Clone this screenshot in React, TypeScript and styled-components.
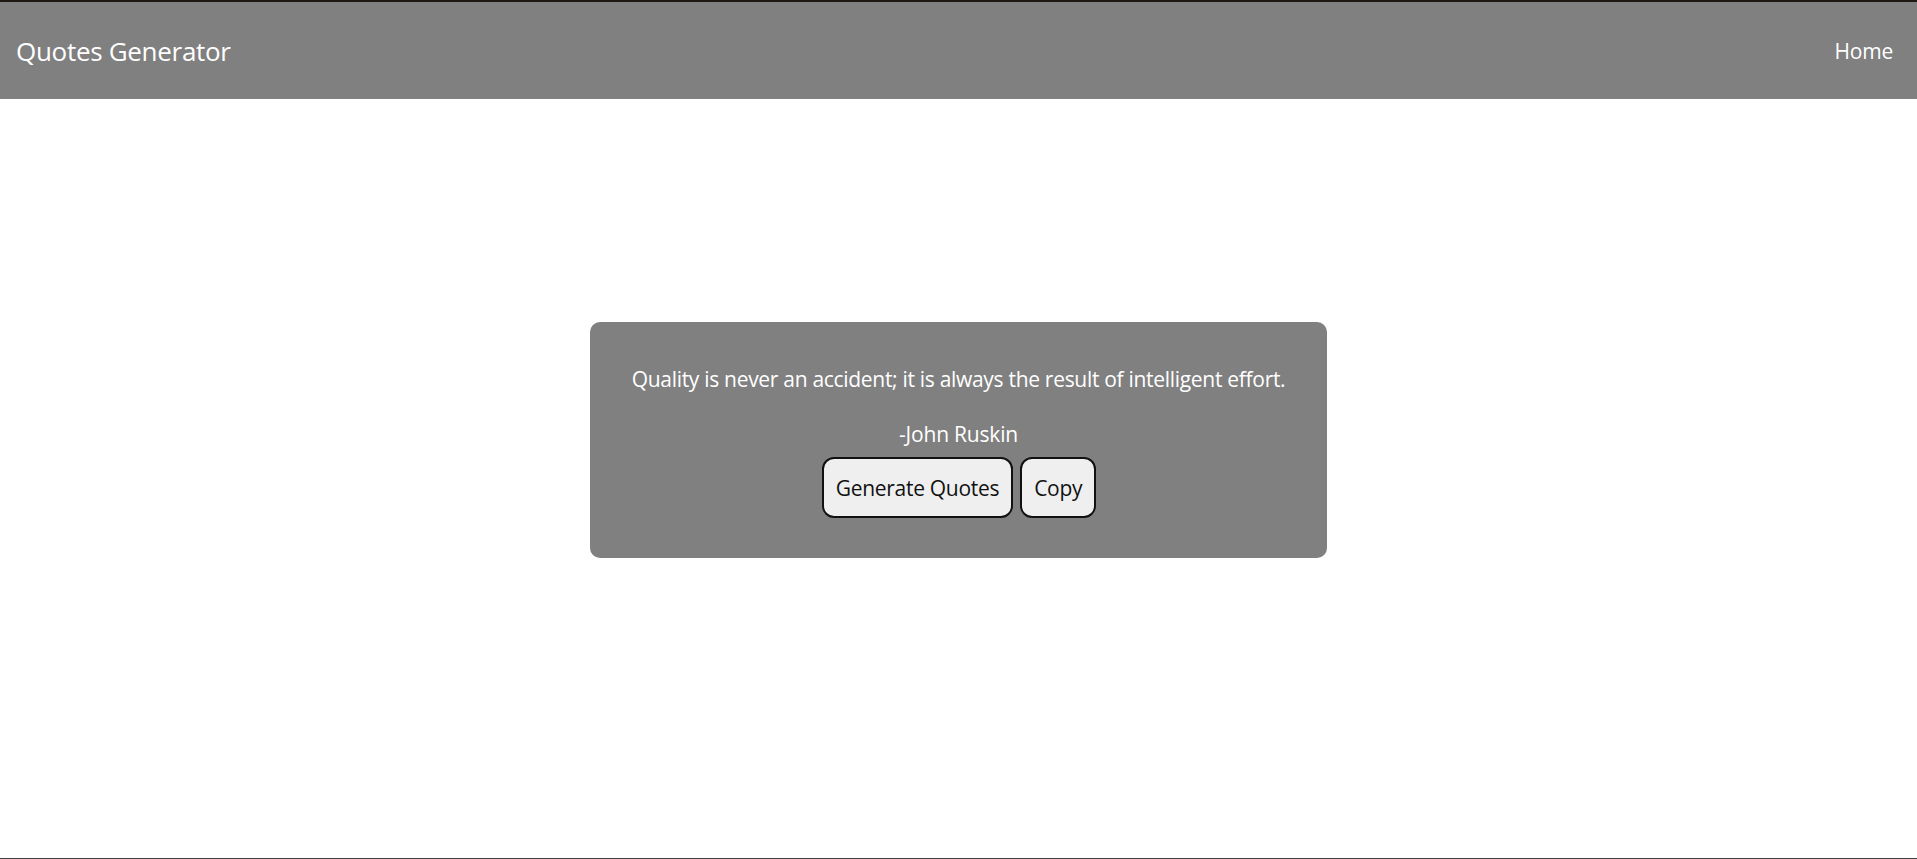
import React, { useState } from "react";
import styled, { createGlobalStyle } from "styled-components";

const GlobalStyle = createGlobalStyle`
	* {
		box-sizing: border-box;
	}
	html,
	body {
		margin: 0;
		padding: 0;
		height: 100%;
		background: #ffffff;
		font-family: "Open Sans", "Noto Sans", sans-serif;
	}
	#root {
		height: 100%;
	}
`;

const quotes = [
	{
		text: "Quality is never an accident; it is always the result of intelligent effort.",
		author: "John Ruskin",
	},
	{
		text: "The secret of getting ahead is getting started.",
		author: "Mark Twain",
	},
];

function App() {
	const [index, setIndex] = useState(0);
	const quote = quotes[index];

	return (
		<>
			<GlobalStyle />
			<Page>
				<NavBar>
					<Brand>Quotes Generator</Brand>
					<NavLink href="#">Home</NavLink>
				</NavBar>
				<Main>
					<QuoteCard>
						<QuoteText>{quote.text}</QuoteText>
						<Author>-{quote.author}</Author>
						<Actions>
							<ActionButton onClick={() => setIndex((index + 1) % quotes.length)}>
								Generate Quotes
							</ActionButton>
							<ActionButton
								onClick={() => navigator.clipboard?.writeText(`${quote.text} -${quote.author}`)}
							>
								Copy
							</ActionButton>
						</Actions>
					</QuoteCard>
				</Main>
			</Page>
		</>
	);
}

const Page = styled.div`
	height: 100%;
	display: flex;
	flex-direction: column;
	border-top: 2px solid #1f1812;
	border-bottom: 1px solid #404040;
`;

const NavBar = styled.nav`
	height: 97px;
	background-color: #808080;
	display: flex;
	align-items: center;
	justify-content: space-between;
	padding: 0 24px 0 16px;
	flex-shrink: 0;
`;

const Brand = styled.span`
	color: #ffffff;
	font-size: 26px;
	letter-spacing: -0.3px;
`;

const NavLink = styled.a`
	color: #ffffff;
	font-size: 21px;
	letter-spacing: -0.2px;
	text-decoration: none;
`;

const Main = styled.main`
	flex: 1;
	display: flex;
	justify-content: center;
	align-items: flex-start;
	padding-top: 223px;
`;

const QuoteCard = styled.div`
	width: 737px;
	height: 236px;
	background-color: #808080;
	border-radius: 10px;
	padding: 43px 20px 0;
	text-align: center;
	color: #ffffff;
`;

const QuoteText = styled.p`
	margin: 0 0 27px;
	font-size: 21px;
	letter-spacing: -0.3px;
	line-height: 28px;
`;

const Author = styled.p`
	margin: 0 0 9px;
	font-size: 21px;
	letter-spacing: -0.2px;
	line-height: 28px;
`;

const Actions = styled.div`
	display: flex;
	justify-content: center;
	gap: 7px;
	padding-left: 1px;
`;

const ActionButton = styled.button`
	height: 61px;
	padding: 0 12px;
	font-family: inherit;
	font-size: 21px;
	letter-spacing: -0.3px;
	color: #111111;
	background-color: #efefef;
	border: 2px solid #111111;
	border-radius: 12px;
	cursor: pointer;
`;

export default App;
